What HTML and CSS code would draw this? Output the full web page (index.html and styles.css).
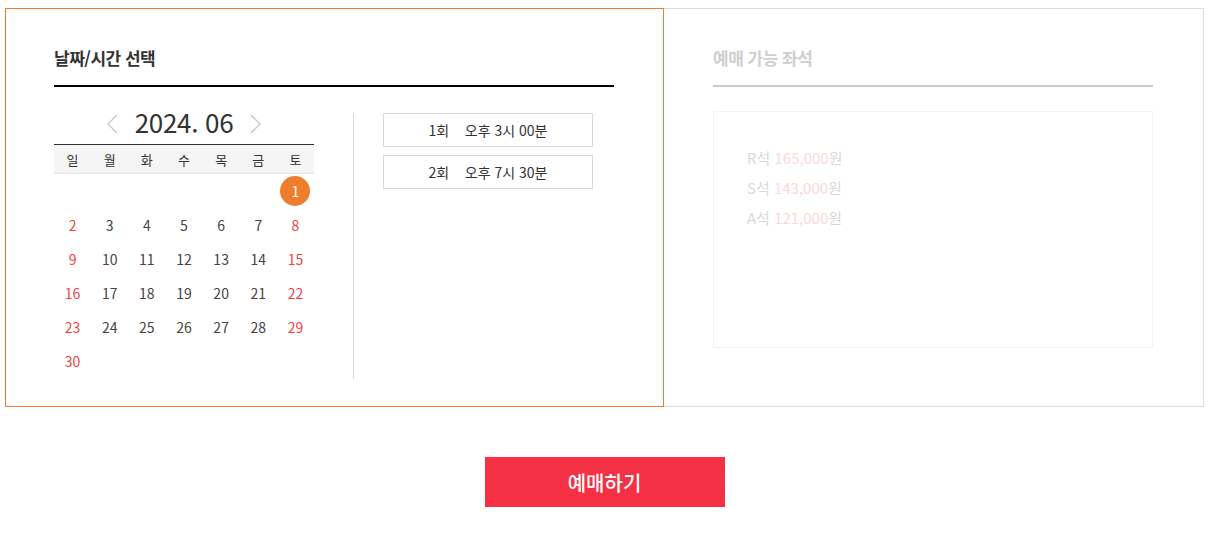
FILE: index.html
```html
<!DOCTYPE html>
<html lang="ko">
<head>
<meta charset="utf-8">
<title>예매</title>
<link rel="stylesheet" href="styles.css">
</head>
<body>
<div class="wrap">
  <div class="panels">
    <section class="panel panel-date">
      <h2 class="panel-title">날짜/시간 선택</h2>
      <div class="date-body">
        <div class="calendar">
          <div class="cal-head">
            <span class="cal-arrow">
              <svg width="12" height="20" viewBox="0 0 12 20"><polyline points="11,1 2,10 11,19" fill="none" stroke="#c8c8c8" stroke-width="1.3"/></svg>
            </span>
            <span class="cal-month">2024. 06</span>
            <span class="cal-arrow">
              <svg width="12" height="20" viewBox="0 0 12 20"><polyline points="1,1 10,10 1,19" fill="none" stroke="#c8c8c8" stroke-width="1.3"/></svg>
            </span>
          </div>
          <div class="cal-week">
            <span>일</span><span>월</span><span>화</span><span>수</span><span>목</span><span>금</span><span>토</span>
          </div>
          <div class="cal-days">
            <span></span><span></span><span></span><span></span><span></span><span></span><span class="sel"><i>1</i></span>
            <span class="sun">2</span><span>3</span><span>4</span><span>5</span><span>6</span><span>7</span><span class="sat">8</span>
            <span class="sun">9</span><span>10</span><span>11</span><span>12</span><span>13</span><span>14</span><span class="sat">15</span>
            <span class="sun">16</span><span>17</span><span>18</span><span>19</span><span>20</span><span>21</span><span class="sat">22</span>
            <span class="sun">23</span><span>24</span><span>25</span><span>26</span><span>27</span><span>28</span><span class="sat">29</span>
            <span class="sun">30</span>
          </div>
        </div>
        <div class="divider"></div>
        <div class="times">
          <button class="time-btn">1회&nbsp;&nbsp;&nbsp;&nbsp;오후 3시 00분</button>
          <button class="time-btn">2회&nbsp;&nbsp;&nbsp;&nbsp;오후 7시 30분</button>
        </div>
      </div>
    </section>
    <section class="panel panel-seat">
      <h2 class="panel-title">예매 가능 좌석</h2>
      <div class="seat-box">
        <p class="seat">R석 <em>165,000</em>원</p>
        <p class="seat">S석 <em>143,000</em>원</p>
        <p class="seat">A석 <em>121,000</em>원</p>
      </div>
    </section>
  </div>
  <div class="actions">
    <button class="book-btn">예매하기</button>
  </div>
</div>
</body>
</html>
```
FILE: styles.css
```css
* { box-sizing: border-box; }
html, body { margin: 0; padding: 0; background: #fff; }
body {
  font-family: "Noto Sans CJK KR", "Noto Sans", sans-serif;
  color: #333;
}
.wrap {
  width: 1199px;
  margin: 8px 0 0 5px;
}
.panels {
  display: flex;
}
.panel {
  height: 399px;
}
.panel-date {
  position: relative;
  z-index: 1;
  width: 659px;
  border: 1px solid #ee7d2e;
  padding: 38px 49px 0 48px;
}
.panel-seat {
  width: 541px;
  margin-left: -1px;
  border: 1px solid #dcdcdc;
  padding: 38px 50px 0 49px;
}
.panel-title {
  margin: 0;
  height: 40px;
  line-height: 22px;
  font-size: 17px;
  font-weight: 700;
  letter-spacing: -0.5px;
  color: #333;
  border-bottom: 2px solid #000;
}
.panel-seat .panel-title {
  color: #cfcfcf;
  border-bottom-color: #cbcbcb;
}
.date-body {
  display: flex;
  margin-top: 26px;
}
.calendar {
  width: 260px;
}
.cal-head {
  height: 32px;
  display: flex;
  align-items: flex-start;
  justify-content: center;
  gap: 17px;
  padding-top: 1px;
  border-bottom: 1px solid #333;
}
.cal-arrow {
  display: flex;
  width: 12px;
  height: 20px;
}
.cal-month {
  font-size: 26px;
  line-height: 20px;
  height: 20px;
  margin-top: -2px;
  color: #333;
  letter-spacing: -0.3px;
}
.cal-week {
  display: grid;
  grid-template-columns: repeat(7, 1fr);
  height: 29px;
  background: #f5f5f5;
  border-bottom: 1px solid #e4e4e4;
}
.cal-week span {
  font-size: 13px;
  line-height: 29px;
  text-align: center;
  color: #333;
}
.cal-days {
  display: grid;
  grid-template-columns: repeat(7, 1fr);
  grid-auto-rows: 34px;
}
.cal-days span {
  display: flex;
  align-items: center;
  justify-content: center;
  font-size: 14px;
  color: #444;
}
.cal-days .sun, .cal-days .sat { color: #f04444; }
.cal-days .sel i {
  font-style: normal;
  width: 30px;
  height: 30px;
  border-radius: 50%;
  background: #ee7d2e;
  color: #fff;
  display: flex;
  align-items: center;
  justify-content: center;
  font-size: 14px;
}
.divider {
  width: 1px;
  height: 266px;
  background: #dcdcdc;
  margin-left: 39px;
}
.times {
  margin-left: 29px;
  display: flex;
  flex-direction: column;
  gap: 8px;
}
.time-btn {
  width: 210px;
  height: 34px;
  border: 1px solid #d9d9d9;
  background: #fff;
  font-family: inherit;
  font-size: 14px;
  color: #333;
  padding: 0;
}
.seat-box {
  margin-top: 24px;
  height: 237px;
  border: 1px solid #f3f3f3;
  padding: 31px 33px;
}
.seat {
  margin: 0;
  font-size: 15px;
  line-height: 30px;
  color: #d9d9d9;
}
.seat em {
  font-style: normal;
  color: #fbd9d9;
}
.actions {
  display: flex;
  justify-content: center;
  margin-top: 50px;
}
.book-btn {
  width: 240px;
  height: 50px;
  border: 0;
  background: #f53245;
  color: #fff;
  font-family: inherit;
  font-size: 20px;
  font-weight: 500;
}
```
